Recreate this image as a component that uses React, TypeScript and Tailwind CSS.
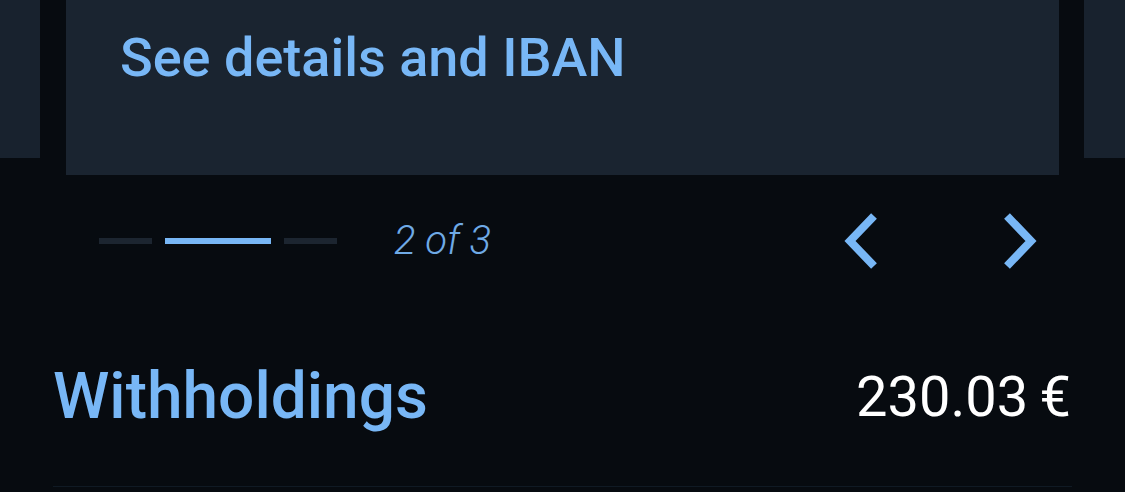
import React from "react";

export default function App() {
  return (
    <div className="w-[1125px] h-[492px] bg-[#070b10] overflow-hidden flex flex-col" style={{ fontFamily: "Roboto, 'Liberation Sans', sans-serif" }}>
      <div className="flex gap-[26px] h-[175px] shrink-0">
        <div className="w-[40px] h-[158px] bg-[#18222e] shrink-0" />
        <div className="w-[993px] h-[175px] bg-[#1a2430] shrink-0 pl-[54px] pt-[28px]">
          <div className="text-[54px] leading-[60px] font-medium text-[#78b7f6]">See details and IBAN</div>
        </div>
        <div className="w-[41px] h-[158px] bg-[#18222e] shrink-0 ml-[-1px]" />
      </div>
      <div className="flex items-center h-[132px] pl-[99px] pr-[88px]">
        <div className="flex items-center gap-[13px]">
          <div className="w-[53px] h-[6px] bg-[#1c2530]" />
          <div className="w-[106px] h-[6px] bg-[#78b7f6]" />
          <div className="w-[53px] h-[6px] bg-[#1c2530]" />
        </div>
        <div className="ml-[57px] text-[40px] italic font-light text-[#6faae6]">2 of 3</div>
        <div className="ml-auto flex items-center gap-[125px]">
          <svg width="34" height="56" viewBox="0 0 34 56">
            <path d="M30 3 L6 28 L30 53" fill="none" stroke="#78b7f6" strokeWidth="8" />
          </svg>
          <svg width="34" height="56" viewBox="0 0 34 56">
            <path d="M4 3 L28 28 L4 53" fill="none" stroke="#78b7f6" strokeWidth="8" />
          </svg>
        </div>
      </div>
      <div className="flex items-center justify-between h-[180px] mx-[53px] pr-[1px] border-b border-[#101a24]">
        <div className="text-[64px] font-medium text-[#78b7f6]">Withholdings</div>
        <div className="text-[56px] text-white">230.03&#8201;€</div>
      </div>
    </div>
  );
}
